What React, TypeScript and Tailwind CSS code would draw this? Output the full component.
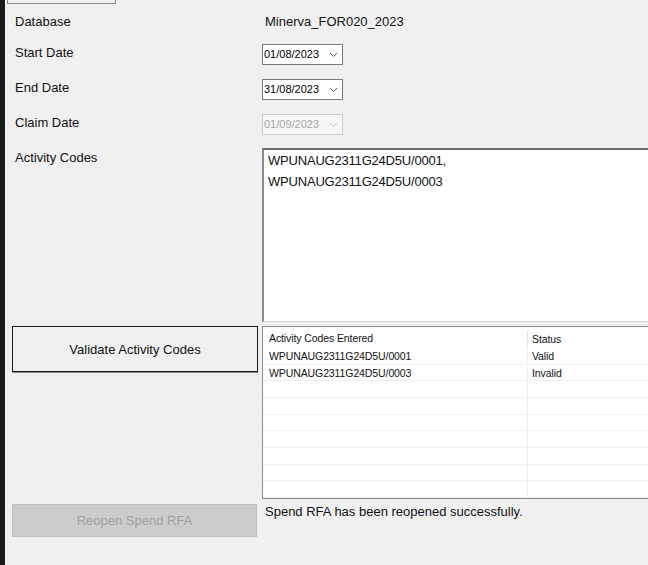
import { useState } from "react";

const font = { fontFamily: '"Liberation Sans", Arial, sans-serif' };

const results = [
  { code: "WPUNAUG2311G24D5U/0001", status: "Valid" },
  { code: "WPUNAUG2311G24D5U/0003", status: "Invalid" },
];

function Chevron({ disabled }: { disabled?: boolean }) {
  return (
    <svg width="9" height="6" viewBox="0 0 9 6" className="shrink-0">
      <polyline
        points="1,1 4.5,4.5 8,1"
        fill="none"
        stroke={disabled ? "#c4c4c4" : "#5a5a5a"}
        strokeWidth="1"
      />
    </svg>
  );
}

function DateBox({ value, disabled }: { value: string; disabled?: boolean }) {
  return (
    <div
      className={`flex h-[21px] w-[81px] items-center justify-between pr-[4px] pl-[1px] border ${
        disabled
          ? "border-[#cccccc] bg-[#f7f7f7] text-[#a6a6a6]"
          : "border-[#7a7a7a] bg-white text-black"
      }`}
    >
      <span className="text-[11px] leading-none">{value}</span>
      <Chevron disabled={disabled} />
    </div>
  );
}

export default function App() {
  const [codes] = useState("WPUNAUG2311G24D5U/0001,\nWPUNAUG2311G24D5U/0003");
  const fillerRows = Array.from({ length: 9 - results.length });

  return (
    <div
      className="flex h-[565px] w-[648px] overflow-hidden bg-[#f0f0f0] text-[13px] text-[#111]"
      style={font}
    >
      {/* dark window edge */}
      <div className="w-[5px] shrink-0 bg-[#1a1a1a]" />

      <div className="flex min-w-0 flex-1 flex-col">
        {/* bottom of a button cut off above */}
        <div className="ml-[2px] h-[4px] w-[109px] border-x border-b border-[#8c8c8c]" />

        <div className="mt-[8px] flex h-[20px] items-center">
          <div className="w-[257px] pl-[10px]">Database</div>
          <div className="pl-[3px]">Minerva_FOR020_2023</div>
        </div>

        <div className="mt-[12px] flex h-[21px] items-start">
          <div className="w-[257px] pl-[10px] pt-[1px] leading-[16px]">Start Date</div>
          <DateBox value="01/08/2023" />
        </div>

        <div className="mt-[14px] flex h-[21px] items-start">
          <div className="w-[257px] pl-[10px] pt-[1px] leading-[16px]">End Date</div>
          <DateBox value="31/08/2023" />
        </div>

        <div className="mt-[14px] flex h-[21px] items-start">
          <div className="w-[257px] pl-[10px] pt-[1px] leading-[16px]">Claim Date</div>
          <DateBox value="01/09/2023" disabled />
        </div>

        <div className="mt-[13px] flex items-start">
          <div className="w-[257px] shrink-0 pl-[10px] pt-[2px] leading-[16px]">Activity Codes</div>
          <div className="h-[174px] w-[400px] shrink-0 border-t-2 border-l-2 border-b border-t-[#6e6e6e] border-l-[#8a8a8a] border-b-[#cfcfcf] bg-white px-[4px] text-[13px] leading-[21px] tracking-[-0.2px] whitespace-pre">
            {codes}
          </div>
        </div>

        <div className="mt-[4px] flex items-start">
          <div className="w-[257px] shrink-0 pl-[7px]">
            <button className="flex h-[46px] w-[246px] items-center justify-center border border-[#1a1a1a] bg-[#f0f0f0] pt-[1px] text-[13px] shadow-[0_1px_0_#8a8a8a]">
              Validate Activity Codes
            </button>
          </div>

          <div className="h-[173px] w-[400px] shrink-0 border border-[#8c8c8c] bg-white text-[10.5px] tracking-[-0.1px]">
            <div className="flex h-[21px] items-center pt-[2px]">
              <div className="w-[264px] shrink-0 pl-[6px]">Activity Codes Entered</div>
              <div className="h-[18px] border-l border-[#e3e3e3] pl-[4px] leading-[18px]">Status</div>
            </div>
            {results.map((r) => (
              <div key={r.code} className="flex h-[16.67px] items-center border-b border-[#efefef] pt-[2px]">
                <div className="w-[264px] shrink-0 pl-[6px]">{r.code}</div>
                <div className="flex h-full items-center border-l border-[#ececec] pl-[4px]">{r.status}</div>
              </div>
            ))}
            {fillerRows.map((_, i) => (
              <div key={i} className="flex h-[16.67px] border-b border-[#efefef]">
                <div className="w-[264px] shrink-0" />
                <div className="h-full border-l border-[#ececec]" />
              </div>
            ))}
          </div>
        </div>

        <div className="mt-[5px] flex items-start">
          <div className="w-[257px] shrink-0 pl-[7px]">
            <button
              disabled
              className="flex h-[33px] w-[245px] items-center justify-center border border-[#bfbfbf] bg-[#cccccc] text-[13px] text-[#a0a0a0]"
            >
              Reopen Spend RFA
            </button>
          </div>
          <div className="pl-[3px] leading-[16px]">Spend RFA has been reopened successfully.</div>
        </div>
      </div>
    </div>
  );
}
